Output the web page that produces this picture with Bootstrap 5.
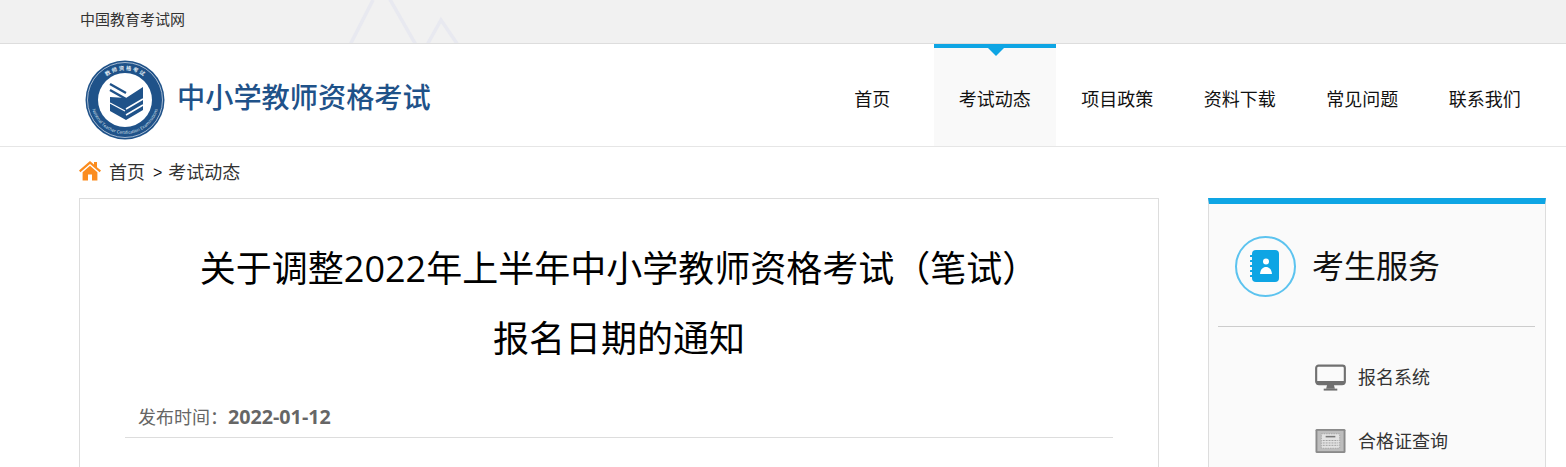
<!DOCTYPE html>
<html lang="zh-CN">
<head>
    <meta charset="UTF-8">
    <meta name="viewport" content="width=device-width, initial-scale=1.0">
    <title>中小学教师资格考试</title>
    <link href="https://cdn.jsdelivr.net/npm/bootstrap@5.3.0/dist/css/bootstrap.min.css" rel="stylesheet">
    <style>
        html, body {
            height: 100%;
            overflow: hidden;
        }
        body {
            background-color: #fff;
            color: #333;
            font-family: "Open Sans", "Noto Sans CJK SC", sans-serif;
        }
        a {
            color: inherit;
            text-decoration: none;
        }
        .top-strip {
            height: 44px;
            background-color: #f1f1f1;
            border-bottom: 1px solid #ddd;
            padding: 0 0 4px 80px;
            font-size: 15px;
            color: #333;
            position: relative;
            overflow: hidden;
        }
        .top-strip svg {
            position: absolute;
            left: 340px;
            top: 0;
        }
        .site-head {
            height: 103px;
            border-bottom: 1px solid #e6e6e6;
            padding: 0 20px 0 85px;
        }
        .logo-link {
            padding-top: 10px;
        }
        .logo-name {
            font-size: 28.2px;
            font-weight: 500;
            color: #1f5289;
            margin: 0 0 6px 12px;
            white-space: nowrap;
        }
        .main-nav a {
            display: flex;
            align-items: center;
            justify-content: center;
            width: 122.5px;
            height: 102px;
            padding-top: 9px;
            font-size: 18px;
            color: #111;
            position: relative;
        }
        .main-nav a.current {
            background-color: #f9f9f9;
            border-top: 4px solid #0ea5e4;
            padding-top: 5px;
        }
        .main-nav a.current::after {
            content: "";
            position: absolute;
            top: 0;
            left: 54px;
            border-style: solid;
            border-width: 8px 8px 0;
            border-color: #0ea5e4 transparent transparent;
        }
        .crumbs {
            height: 51px;
            padding: 0 0 0 79px;
            font-size: 18px;
            color: #333;
        }
        .crumbs svg {
            margin-right: 8px;
            margin-top: -3px;
        }
        .crumb-sep {
            margin: 0 6px 0 8px;
            font-family: "Liberation Sans", sans-serif;
            font-size: 16px;
            color: #111;
        }
        .page-body {
            padding: 0 20px 0 79px;
            gap: 49px;
        }
        .article-box {
            width: 1080px;
            height: 400px;
            border: 1px solid #ddd;
            padding: 35px 45px 0;
        }
        .article-title {
            font-size: 36px;
            font-weight: 400;
            line-height: 70px;
            color: #000;
            text-align: center;
            margin: 0;
        }
        .article-meta {
            height: 44px;
            margin-top: 20px;
            padding: 9px 0 0 13px;
            border-bottom: 1px solid #ddd;
            font-size: 18px;
            line-height: 27px;
            color: #666;
        }
        .article-meta b {
            font-size: 19.7px;
        }
        .service-box {
            width: 338px;
            height: 400px;
            border: 1px solid #ddd;
            border-top: 6px solid #0ea5e4;
            background-color: #fafafa;
            padding: 0 10px 0 9px;
        }
        .service-head {
            height: 123px;
            border-bottom: 1px solid #ccc;
            padding: 2px 0 0 17px;
        }
        .service-round {
            width: 61px;
            height: 61px;
            border: 2px solid #5cc3ef;
            border-radius: 50%;
            padding-right: 3px;
        }
        .service-name {
            font-size: 32px;
            color: #111;
            margin-left: 16px;
        }
        .service-link {
            height: 64px;
            padding-left: 97px;
            font-size: 18px;
            color: #333;
        }
        .service-link svg {
            margin-right: 12px;
        }
        .service-first {
            margin-top: 18px;
        }
    </style>
</head>
<body>
    <div class="top-strip d-flex align-items-center">
        <span>中国教育考试网</span>
        <svg width="140" height="43" viewBox="0 0 140 43" fill="none" stroke="#e8e9f0" stroke-width="3.5">
            <path d="M10 45 L33 0"/>
            <path d="M48 -4 L76 45"/>
            <path d="M87 45 L101 20 L118 45"/>
        </svg>
    </div>

    <header class="site-head d-flex align-items-center justify-content-between">
        <a href="#" class="logo-link d-flex align-items-center">
            <svg width="80" height="80" viewBox="0 0 80 80">
                <defs>
                    <path id="ringTop" d="M10 40 A30 30 0 0 1 70 40"/>
                    <path id="ringLow" d="M6 40 A34 34 0 0 0 74 40"/>
                </defs>
                <circle cx="40" cy="40" r="39.5" fill="#1f5289"/>
                <circle cx="40" cy="40" r="37.5" fill="none" stroke="#dfe7f0" stroke-width=".7"/>
                <circle cx="40" cy="40" r="27" fill="#fff"/>
                <text font-size="5.4" fill="#dfe7f0" font-weight="700" text-anchor="middle"><textPath href="#ringTop" startOffset="50%">教 师 资 格 考 试</textPath></text>
                <text font-size="4.3" fill="#dfe7f0" text-anchor="middle"><textPath href="#ringLow" startOffset="50%">National Teacher Certification Examinations</textPath></text>
                <path d="M41 38 L58 27 V50 L41 60 L25 51 V37 Z" fill="#1f5289"/>
                <path d="M25 24 L41 33 M25 30 L41 39" stroke="#1f5289" stroke-width="2.4" fill="none"/>
                <path d="M41 49 L58 39 M41 55 L58 45" stroke="#fff" stroke-width="1.5" fill="none"/>
                <path d="M25 43 L40 51" stroke="#fff" stroke-width="1.2" fill="none"/>
            </svg>
            <span class="logo-name">中小学教师资格考试</span>
        </a>
        <nav class="main-nav d-flex align-self-start">
            <a href="#">首页</a>
            <a href="#" class="current">考试动态</a>
            <a href="#">项目政策</a>
            <a href="#">资料下载</a>
            <a href="#">常见问题</a>
            <a href="#">联系我们</a>
        </nav>
    </header>

    <div class="crumbs d-flex align-items-center">
        <svg width="22" height="20" viewBox="0 0 22 20" fill="#fb8c1e">
            <path d="M11 0 L0 9.6 L1.4 11.2 L11 3 L20.6 11.2 L22 9.6 L18 6.2 V1 H15 V3.6 Z"/>
            <path d="M3.6 11.2 L11 4.8 L18.4 11.2 V19.5 H13 V13.5 H9 V19.5 H3.6 Z"/>
        </svg>
        <a href="#">首页</a>
        <span class="crumb-sep">&gt;</span>
        <a href="#">考试动态</a>
    </div>

    <div class="page-body d-flex align-items-start">
        <main class="article-box">
            <h1 class="article-title">关于调整2022年上半年中小学教师资格考试（笔试）<br>报名日期的通知</h1>
            <div class="article-meta">发布时间：<b>2022-01-12</b></div>
        </main>
        <aside class="service-box">
            <div class="service-head d-flex align-items-center">
                <div class="service-round d-flex align-items-center justify-content-center">
                    <svg width="29" height="32" viewBox="0 0 29 32">
                        <rect x="2" y="0" width="27" height="32" rx="4" fill="#0ea5e4"/>
                        <path d="M0.8 6 H4 M0.8 11 H4 M0.8 16 H4 M0.8 21 H4 M0.8 26 H4" stroke="#0ea5e4" stroke-width="2" stroke-linecap="round"/>
                        <circle cx="16" cy="11.5" r="3" fill="#fff"/>
                        <path d="M10 24 C10.5 19 13 17 16 17 C19 17 21.5 19 22 24 Z" fill="#fff"/>
                    </svg>
                </div>
                <span class="service-name">考生服务</span>
            </div>
            <a href="#" class="service-link service-first d-flex align-items-center">
                <svg width="31" height="27" viewBox="0 0 32 27">
                    <rect x="1.2" y="1.2" width="29.6" height="19" rx="2.5" fill="none" stroke="#707070" stroke-width="2.2"/>
                    <path d="M1 17 H31 V19 Q31 21.5 28 21.5 H4 Q1 21.5 1 19 Z" fill="#707070"/>
                    <path d="M12.5 21 H19.5 L20.5 25 H11.5 Z" fill="#707070"/>
                    <rect x="9" y="25" width="14" height="2" fill="#707070"/>
                </svg>
                <span>报名系统</span>
            </a>
            <a href="#" class="service-link d-flex align-items-center">
                <svg width="31" height="26" viewBox="0 0 32 26">
                    <rect x="0.5" y="0.5" width="31" height="25" rx="1.5" fill="#8a8a8a"/>
                    <rect x="2.5" y="2.5" width="27" height="21" fill="#bdbdbd"/>
                    <rect x="6.5" y="5.5" width="19" height="15" fill="#e2e2e2" stroke="#a5a5a5" stroke-dasharray="1.5 1"/>
                    <path d="M11 8.5 H21" stroke="#777" stroke-width="1.6"/>
                    <path d="M8 12.5 H24 M8 15 H24 M8 17.5 H24" stroke="#a0a0a0" stroke-width="1" stroke-dasharray="2 1"/>
                </svg>
                <span>合格证查询</span>
            </a>
        </aside>
    </div>

    <script src="https://cdn.jsdelivr.net/npm/bootstrap@5.3.0/dist/js/bootstrap.bundle.min.js"></script>
</body>
</html>
